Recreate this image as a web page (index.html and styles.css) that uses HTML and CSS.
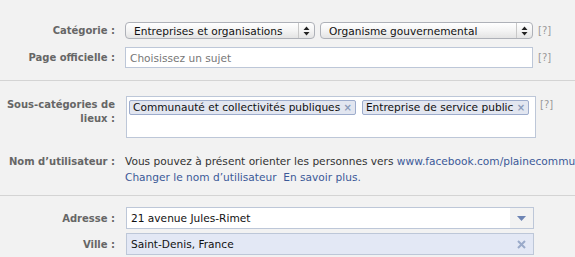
FILE: index.html
```html
<!DOCTYPE html>
<html lang="fr">
<head>
    <meta charset="UTF-8">
    <meta name="viewport" content="width=device-width, initial-scale=1.0">
    <title>Informations de base</title>
    <link rel="stylesheet" href="styles.css">
</head>
<body>
    <div class="edit-page">
        <div class="group group--top">
            <div class="row">
                <label class="row__label">Catégorie :</label>
                <div class="row__field">
                    <div class="select select--main">
                        <span class="select__text">Entreprises et organisations</span>
                        <span class="select__arrows">
                            <svg width="7" height="10" viewBox="0 0 7 10"><path d="M3.5 0.5 L6.5 4 L0.5 4 Z M0.5 6 L6.5 6 L3.5 9.5 Z" fill="#222"/></svg>
                        </span>
                    </div>
                    <div class="select select--sub">
                        <span class="select__text">Organisme gouvernemental</span>
                        <span class="select__arrows">
                            <svg width="7" height="10" viewBox="0 0 7 10"><path d="M3.5 0.5 L6.5 4 L0.5 4 Z M0.5 6 L6.5 6 L3.5 9.5 Z" fill="#222"/></svg>
                        </span>
                    </div>
                </div>
                <span class="help">[?]</span>
            </div>
            <div class="row row--second">
                <label class="row__label">Page officielle :</label>
                <div class="row__field">
                    <div class="text-input text-input--wide">
                        <span class="placeholder">Choisissez un sujet</span>
                    </div>
                </div>
                <span class="help">[?]</span>
            </div>
        </div>

        <div class="group group--middle">
            <div class="row row--top">
                <label class="row__label row__label--multi">Sous-catégories de lieux :</label>
                <div class="row__field">
                    <div class="token-box">
                        <span class="token">Communauté et collectivités publiques <span class="token__x">×</span></span>
                        <span class="token">Entreprise de service public <span class="token__x">×</span></span>
                    </div>
                </div>
                <span class="help help--box">[?]</span>
            </div>
            <div class="row row--top row--username">
                <label class="row__label">Nom d’utilisateur :</label>
                <div class="row__field row__field--text">
                    <div class="line">Vous pouvez à présent orienter les personnes vers <a href="#">www.facebook.com/plainecommune</a></div>
                    <div class="line"><a href="#">Changer le nom d’utilisateur</a>&nbsp;&nbsp;<a href="#">En savoir plus.</a></div>
                </div>
            </div>
        </div>

        <div class="group group--bottom">
            <div class="row">
                <label class="row__label">Adresse :</label>
                <div class="row__field">
                    <div class="text-input text-input--address">
                        <span class="value">21 avenue Jules-Rimet</span>
                        <span class="dropdown">
                            <svg width="9" height="5" viewBox="0 0 9 5"><path d="M0 0 L9 0 L4.5 5 Z" fill="#6d84b4"/></svg>
                        </span>
                    </div>
                </div>
            </div>
            <div class="row row--city">
                <label class="row__label">Ville :</label>
                <div class="row__field">
                    <div class="text-input text-input--city">
                        <span class="value">Saint-Denis, France</span>
                        <span class="clear">
                            <svg width="9" height="9" viewBox="0 0 9 9"><path d="M1 1 L8 8 M8 1 L1 8" stroke="#9aaac9" stroke-width="2"/></svg>
                        </span>
                    </div>
                </div>
            </div>
        </div>
    </div>
</body>
</html>
```

FILE: styles.css
```css
body{
    margin: 0;
    background-color: #f2f2f2;
    font-family: "DejaVu Sans", Verdana, sans-serif;
    font-size: 10.6px;
    color: #333;
    overflow: hidden;
}
a{
    color: #3b5998;
    text-decoration: none;
}
.edit-page{
    width: 575px;
    white-space: nowrap;
}
.group{
    border-bottom: 1px solid #d4d4d4;
}
.group--top{
    padding: 22px 0 12px;
}
.group--middle{
    padding: 15px 0 10px;
}
.group--bottom{
    padding: 11px 0 4px;
    border-bottom: none;
}
.row{
    display: flex;
    align-items: center;
}
.row--top{
    align-items: flex-start;
}
.row--second{
    margin-top: 8px;
}
.row--username{
    margin-top: 16px;
}
.row--city{
    margin-top: 4px;
}
.row__label{
    width: 115px;
    padding-right: 10px;
    flex-shrink: 0;
    text-align: right;
    font-size: 10px;
    font-weight: bold;
    color: #666;
    line-height: 15px;
}
.row__label--multi{
    white-space: normal;
    padding-top: 2px;
    line-height: 14px;
}
.row__field{
    display: flex;
    gap: 5px;
}
.row__field--text{
    flex-direction: column;
    gap: 1px;
    line-height: 15px;
}
.help{
    margin-left: 5px;
    color: #999;
    font-size: 10px;
}
.help--box{
    margin-left: 4px;
    margin-top: 3px;
}

/* selects */
.select{
    box-sizing: border-box;
    height: 17px;
    display: flex;
    align-items: center;
    justify-content: space-between;
    border: 1px solid #aeb1b8;
    border-radius: 4px;
    background: linear-gradient(#ffffff, #f4f4f4 50%, #e4e4e4);
    color: #111;
}
.select--main{
    width: 190px;
}
.select--sub{
    width: 213px;
}
.select__text{
    padding-left: 8px;
}
.select__arrows{
    width: 15px;
    height: 15px;
    border-left: 1px solid #c8c8c8;
    display: flex;
    align-items: center;
    justify-content: center;
}

/* inputs */
.text-input{
    box-sizing: border-box;
    height: 22px;
    display: flex;
    align-items: center;
    justify-content: space-between;
    border: 1px solid #bdc7d8;
    background-color: #fff;
    padding-left: 4px;
}
.text-input--wide{
    width: 408px;
    height: 21px;
}
.placeholder{
    color: #777;
}
.text-input--address{
    width: 408px;
    margin-left: 1px;
    color: #111;
}
.dropdown{
    width: 23px;
    height: 20px;
    background-color: #f2f2f2;
    display: flex;
    align-items: center;
    justify-content: center;
}
.text-input--city{
    width: 408px;
    margin-left: 1px;
    background-color: #e3e8f5;
    color: #111;
}
.clear{
    width: 23px;
    display: flex;
    align-items: center;
    justify-content: center;
}

/* tokens */
.token-box{
    box-sizing: border-box;
    width: 410px;
    height: 42px;
    margin-left: 1px;
    border: 1px solid #bdc7d8;
    background-color: #fff;
    padding: 3px 2px;
    display: flex;
    align-items: flex-start;
    gap: 6px;
}
.token{
    height: 15px;
    box-sizing: border-box;
    line-height: 13px;
    padding: 0 3px;
    border: 1px solid #9daccc;
    border-radius: 2px;
    background-color: #e2e6f0;
    color: #111;
}
.token__x{
    color: #8a9ab9;
    font-weight: bold;
    font-size: 10px;
}
```
